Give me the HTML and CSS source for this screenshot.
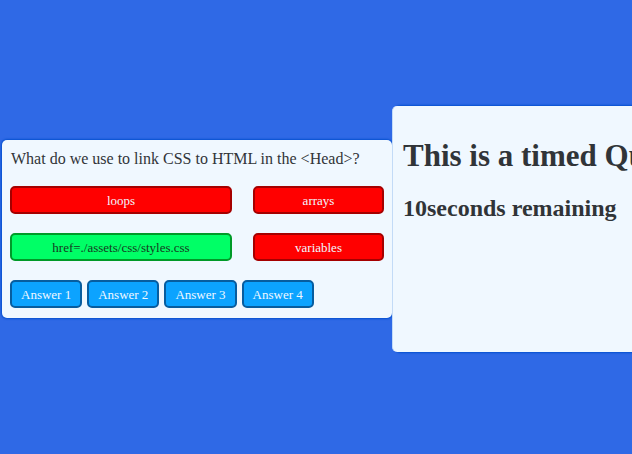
FILE: index.html
```html
<!DOCTYPE html>
<html lang="en">
<head>
  <meta charset="utf-8">
  <meta name="viewport" content="width=device-width, initial-scale=1">
  <title>Timed Quiz</title>
  <link rel="stylesheet" href="styles.css">
</head>
<body>
  <main class="quiz">
    <section class="card question-card">
      <p class="question">What do we use to link CSS to HTML in the &lt;Head&gt;?</p>
      <div class="choices">
        <button type="button" class="btn wrong">loops</button>
        <button type="button" class="btn wrong">arrays</button>
        <button type="button" class="btn correct">href=./assets/css/styles.css</button>
        <button type="button" class="btn wrong">variables</button>
      </div>
      <div class="answers">
        <button type="button" class="btn answer">Answer 1</button>
        <button type="button" class="btn answer">Answer 2</button>
        <button type="button" class="btn answer">Answer 3</button>
        <button type="button" class="btn answer">Answer 4</button>
      </div>
    </section>
    <section class="card timer-card">
      <h1>This is a timed Quiz</h1>
      <h2>10seconds remaining</h2>
    </section>
  </main>
</body>
</html>
```
FILE: styles.css
```css
* {
  box-sizing: border-box;
}

body {
  margin: 0;
  background: #2f69e6;
  color: #303438;
  font-family: "Liberation Serif", "Times New Roman", serif;
}

.quiz {
  display: flex;
  align-items: center;
  min-height: 100vh;
  padding: 4px 0 0 2px;
  overflow: hidden;
}

.card {
  flex: none;
  background: #f0f8ff;
  border-radius: 5px;
  box-shadow: 0 0 2px 1px #0550cf;
}

.question-card {
  padding: 8px 8px 10px;
}

.question {
  margin: 0 0 16px;
  padding-left: 1px;
  font-size: 16px;
  line-height: 22px;
}

.choices {
  display: grid;
  grid-template-columns: 222px 131px;
  gap: 19px 21px;
  margin-bottom: 19px;
}

.answers {
  display: flex;
  gap: 5px;
}

.btn {
  height: 28px;
  padding: 2px 9px 0;
  border: 2px solid;
  border-radius: 5px;
  color: #f0f8ff;
  font-family: inherit;
  font-size: 13px;
  cursor: pointer;
}

.wrong {
  background: #ff0000;
  border-color: #a50000;
}

.correct {
  background: #00ff66;
  border-color: #009a28;
  color: #17391f;
}

.answer {
  background: #0ca3ff;
  border-color: #075d9f;
}

.timer-card {
  min-height: 246px;
  padding: 31px 10px;
  border-left: 1px solid #c3dbf7;
  box-shadow: 3px 0 2px 1px #0550cf;
  white-space: nowrap;
}

h1,
h2 {
  margin: 0;
}

h1 {
  margin-bottom: 15px;
  font-size: 31px;
  line-height: 38px;
}

h2 {
  font-size: 24px;
  line-height: 36px;
}
```
